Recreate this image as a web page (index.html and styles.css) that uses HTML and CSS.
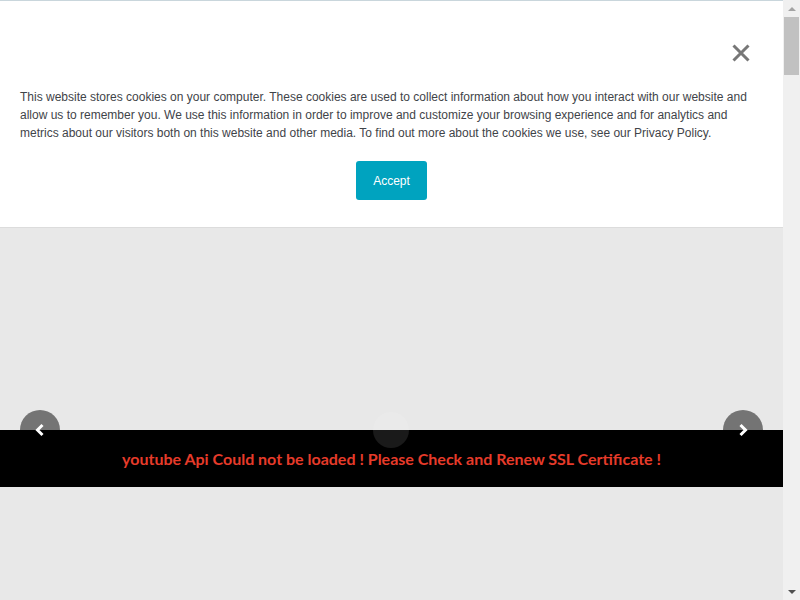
FILE: index.html
```html
<!DOCTYPE html>
<html lang="en">
<head>
    <meta charset="UTF-8">
    <meta name="viewport" content="width=device-width, initial-scale=1.0">
    <title>Slider</title>
    <link rel="stylesheet" href="styles.css">
</head>
<body>
    <div class="window">
        <div class="page">
            <div class="cookie-banner">
                <div class="cookie-close-row">
                    <button class="cookie-close" aria-label="Close">
                        <svg width="18" height="18" viewBox="0 0 18 18">
                            <path d="M1.5 1.5 L16.5 16.5 M16.5 1.5 L1.5 16.5" stroke="#777" stroke-width="3" fill="none"/>
                        </svg>
                    </button>
                </div>
                <p class="cookie-text">This website stores cookies on your computer. These cookies are used to collect information about how you interact with our website and allow us to remember you. We use this information in order to improve and customize your browsing experience and for analytics and metrics about our visitors both on this website and other media. To find out more about the cookies we use, see our Privacy Policy.</p>
                <div class="cookie-actions">
                    <button class="accept-button">Accept</button>
                </div>
            </div>

            <div class="slider">
                <div class="video-error">youtube Api Could not be loaded ! Please Check and Renew SSL Certificate !</div>
                <button class="slider-arrow prev" aria-label="Previous">
                    <svg width="12" height="14" viewBox="0 0 12 14">
                        <path d="M8.5 2 L3.5 7 L8.5 12" stroke="#fff" stroke-width="3" fill="none"/>
                    </svg>
                </button>
                <div class="play-dot"></div>
                <button class="slider-arrow next" aria-label="Next">
                    <svg width="12" height="14" viewBox="0 0 12 14">
                        <path d="M3.5 2 L8.5 7 L3.5 12" stroke="#fff" stroke-width="3" fill="none"/>
                    </svg>
                </button>
            </div>
        </div>

        <div class="scrollbar">
            <div class="scroll-btn up"><span class="tri-up"></span></div>
            <div class="scroll-thumb"></div>
            <div class="scroll-track"></div>
            <div class="scroll-btn down"><span class="tri-down"></span></div>
        </div>
    </div>
</body>
</html>
```

FILE: styles.css
```css
body {
    margin: 0;
    font-family: "Liberation Sans", Arial, sans-serif;
    overflow: hidden;
}
.window {
    display: flex;
    height: 600px;
}
.page {
    flex: 1;
    background-color: #e8e8e8;
    overflow: hidden;
}
.cookie-banner {
    background-color: #fff;
    border-top: 1px solid #c9d6dc;
    border-bottom: 1px solid #dcdcdc;
    padding: 0 20px 27px 20px;
}
.cookie-close-row {
    display: flex;
    justify-content: flex-end;
    align-items: flex-start;
    height: 87px;
    padding-top: 43px;
    box-sizing: border-box;
}
.cookie-close {
    background: none;
    border: none;
    padding: 0;
    margin-right: 13px;
    width: 18px;
    height: 18px;
    cursor: pointer;
    display: block;
}
.cookie-close svg {
    display: block;
}
.cookie-text {
    margin: 0;
    font-size: 12px;
    line-height: 18px;
    color: #3f4449;
}
.cookie-actions {
    display: flex;
    justify-content: center;
    margin-top: 19px;
}
.accept-button {
    width: 71px;
    height: 39px;
    background-color: #00a3bf;
    color: #fff;
    border: none;
    border-radius: 3px;
    font-family: "Liberation Sans", Arial, sans-serif;
    font-size: 12px;
    cursor: pointer;
}
.slider {
    position: relative;
    height: 372px;
    padding-top: 202px;
    box-sizing: border-box;
}
.video-error {
    height: 57px;
    background-color: #000;
    color: #e63b2a;
    font-family: Lato, "Liberation Sans", sans-serif;
    font-weight: bold;
    font-size: 16px;
    display: flex;
    align-items: center;
    justify-content: center;
}
.slider-arrow {
    position: absolute;
    top: 182px;
    width: 40px;
    height: 40px;
    border: none;
    border-radius: 50%;
    background-color: rgba(0, 0, 0, 0.5);
    padding: 0;
    display: flex;
    align-items: center;
    justify-content: center;
    cursor: pointer;
}
.slider-arrow.prev {
    left: 20px;
}
.slider-arrow.next {
    right: 20px;
}
.play-dot {
    position: absolute;
    top: 184px;
    left: 373px;
    width: 36px;
    height: 36px;
    border-radius: 50%;
    background-color: rgba(255, 255, 255, 0.1);
}
.scrollbar {
    width: 17px;
    display: flex;
    flex-direction: column;
    background-color: #f0f0f0;
}
.scroll-btn {
    height: 17px;
    display: flex;
    align-items: center;
    justify-content: center;
}
.scroll-thumb {
    height: 58px;
    margin: 0 1px;
    background-color: #c1c1c1;
}
.scroll-track {
    flex: 1;
}
.tri-up {
    border-left: 4px solid transparent;
    border-right: 4px solid transparent;
    border-bottom: 4px solid #a3a3a3;
}
.tri-down {
    border-left: 4px solid transparent;
    border-right: 4px solid transparent;
    border-top: 4px solid #505050;
}
```
